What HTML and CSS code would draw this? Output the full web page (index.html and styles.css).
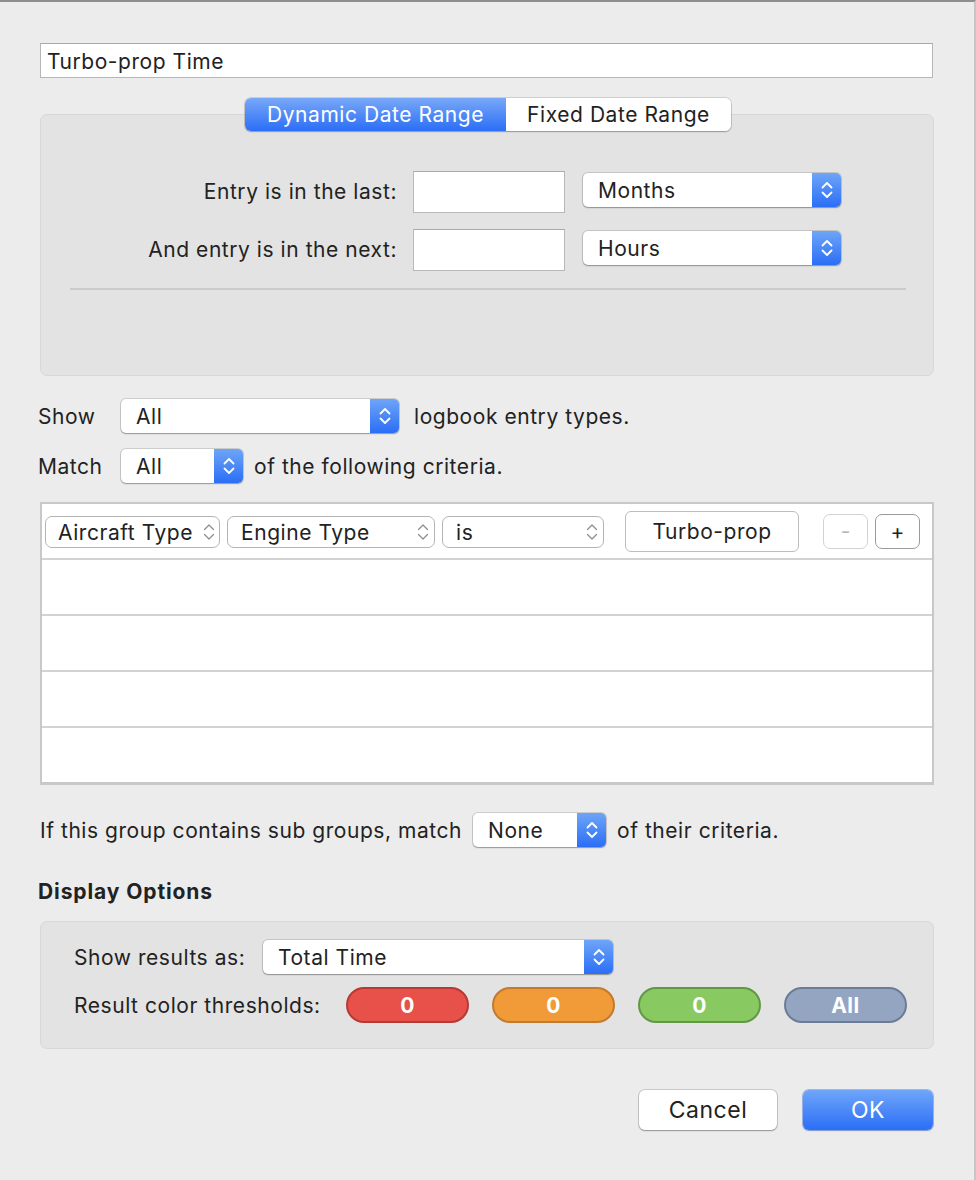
FILE: index.html
```html
<!DOCTYPE html>
<html>
<head>
<meta charset="utf-8">
<link rel="stylesheet" href="styles.css">
</head>
<body>
<div class="window">
  <div class="title-field">Turbo-prop Time</div>

  <div class="seg-wrap">
    <div class="segmented">
      <div class="seg seg-on">Dynamic Date Range</div>
      <div class="seg seg-off">Fixed Date Range</div>
    </div>
  </div>

  <div class="group date-group">
    <div class="date-grid">
      <div class="date-label">Entry is in the last:</div>
      <div class="field"></div>
      <div class="popup popup-months"><span class="popup-text">Months</span><span class="stepper"><svg width="14" height="22" viewBox="0 0 14 22"><path d="M2.5 8.5 L7 4 L11.5 8.5 M2.5 13.5 L7 18 L11.5 13.5" stroke="#fff" stroke-width="1.8" fill="none" stroke-linecap="round" stroke-linejoin="round"/></svg></span></div>

      <div class="date-label">And entry is in the next:</div>
      <div class="field"></div>
      <div class="popup popup-months"><span class="popup-text">Hours</span><span class="stepper"><svg width="14" height="22" viewBox="0 0 14 22"><path d="M2.5 8.5 L7 4 L11.5 8.5 M2.5 13.5 L7 18 L11.5 13.5" stroke="#fff" stroke-width="1.8" fill="none" stroke-linecap="round" stroke-linejoin="round"/></svg></span></div>
    </div>
    <div class="separator"></div>
  </div>

  <div class="line-row show-row">
    <span class="row-label">Show</span>
    <div class="popup popup-show"><span class="popup-text">All</span><span class="stepper"><svg width="14" height="22" viewBox="0 0 14 22"><path d="M2.5 8.5 L7 4 L11.5 8.5 M2.5 13.5 L7 18 L11.5 13.5" stroke="#fff" stroke-width="1.8" fill="none" stroke-linecap="round" stroke-linejoin="round"/></svg></span></div>
    <span class="after-text">logbook entry types.</span>
  </div>

  <div class="line-row match-row">
    <span class="row-label">Match</span>
    <div class="popup popup-match"><span class="popup-text">All</span><span class="stepper"><svg width="14" height="22" viewBox="0 0 14 22"><path d="M2.5 8.5 L7 4 L11.5 8.5 M2.5 13.5 L7 18 L11.5 13.5" stroke="#fff" stroke-width="1.8" fill="none" stroke-linecap="round" stroke-linejoin="round"/></svg></span></div>
    <span class="after-text">of the following criteria.</span>
  </div>

  <div class="criteria">
    <div class="crow crow-first">
      <div class="gpopup gp-aircraft"><span>Aircraft Type</span><svg class="gchev" width="12" height="20" viewBox="0 0 12 20"><path d="M1.5 7.5 L6 3 L10.5 7.5 M1.5 12.5 L6 17 L10.5 12.5" stroke="#8e8e8e" stroke-width="1.3" fill="none" stroke-linecap="round" stroke-linejoin="round"/></svg></div>
      <div class="gpopup gp-engine"><span>Engine Type</span><svg class="gchev" width="12" height="20" viewBox="0 0 12 20"><path d="M1.5 7.5 L6 3 L10.5 7.5 M1.5 12.5 L6 17 L10.5 12.5" stroke="#8e8e8e" stroke-width="1.3" fill="none" stroke-linecap="round" stroke-linejoin="round"/></svg></div>
      <div class="gpopup gp-is"><span>is</span><svg class="gchev" width="12" height="20" viewBox="0 0 12 20"><path d="M1.5 7.5 L6 3 L10.5 7.5 M1.5 12.5 L6 17 L10.5 12.5" stroke="#8e8e8e" stroke-width="1.3" fill="none" stroke-linecap="round" stroke-linejoin="round"/></svg></div>
      <div class="value-field">Turbo-prop</div>
      <div class="sq-btn sq-disabled">-</div>
      <div class="sq-btn">+</div>
    </div>
    <div class="crow"></div>
    <div class="crow"></div>
    <div class="crow"></div>
    <div class="crow crow-last"></div>
  </div>

  <div class="line-row sub-row">
    <span class="sub-label">If this group contains sub groups, match</span>
    <div class="popup popup-none"><span class="popup-text">None</span><span class="stepper"><svg width="14" height="22" viewBox="0 0 14 22"><path d="M2.5 8.5 L7 4 L11.5 8.5 M2.5 13.5 L7 18 L11.5 13.5" stroke="#fff" stroke-width="1.8" fill="none" stroke-linecap="round" stroke-linejoin="round"/></svg></span></div>
    <span class="after-text">of their criteria.</span>
  </div>

  <div class="section-title">Display Options</div>

  <div class="group display-group">
    <div class="disp-row">
      <span class="disp-label disp-label-1">Show results as:</span>
      <div class="popup popup-results"><span class="popup-text">Total Time</span><span class="stepper"><svg width="14" height="22" viewBox="0 0 14 22"><path d="M2.5 8.5 L7 4 L11.5 8.5 M2.5 13.5 L7 18 L11.5 13.5" stroke="#fff" stroke-width="1.8" fill="none" stroke-linecap="round" stroke-linejoin="round"/></svg></span></div>
    </div>
    <div class="disp-row disp-row-2">
      <span class="disp-label disp-label-2">Result color thresholds:</span>
      <div class="pills">
        <div class="pill pill-red">0</div>
        <div class="pill pill-orange">0</div>
        <div class="pill pill-green">0</div>
        <div class="pill pill-gray">All</div>
      </div>
    </div>
  </div>

  <div class="buttons">
    <div class="btn btn-cancel">Cancel</div>
    <div class="btn btn-ok">OK</div>
  </div>
</div>
</body>
</html>
```

FILE: styles.css
```css
* { box-sizing: border-box; }

html, body {
  margin: 0;
  padding: 0;
  background: #ececec;
}

body {
  font-family: Inter, "Liberation Sans", Arial, sans-serif;
  font-size: 21px;
  letter-spacing: 0.55px;
  color: #222;
}

.window {
  width: 976px;
  height: 1180px;
  border-top: 2px solid #8e8e8e;
  border-right: 2px solid #c6c6c6;
  padding: 41px 0 0 40px;
  background: #ececec;
  overflow: hidden;
}

.title-field {
  width: 893px;
  height: 35px;
  background: #fff;
  border: 1px solid #b6b6b6;
  border-top-color: #a9a9a9;
  padding-left: 6px;
  line-height: 35px;
}

.seg-wrap {
  width: 894px;
  display: flex;
  justify-content: center;
  margin-top: 20px;
  position: relative;
  z-index: 1;
  padding-left: 2px;
}

.segmented {
  display: flex;
  height: 33px;
  border-radius: 6px;
  box-shadow: 0 0 0 1px rgba(0,0,0,0.12), 0 1px 1.5px rgba(0,0,0,0.25);
  overflow: hidden;
  background: #fff;
}

.seg {
  height: 33px;
  line-height: 33px;
  text-align: center;
  white-space: nowrap;
}

.seg-on {
  width: 261px;
  color: #fff;
  background: linear-gradient(#79a8f8, #2b6ef6);
}

.seg-off {
  width: 225px;
  color: #222;
  background: #fff;
}

.group {
  background: #e3e3e3;
  border: 1px solid #d8d8d8;
  border-radius: 7px;
  width: 894px;
}

.date-group {
  margin-top: -17px;
  height: 262px;
  padding-top: 56px;
}

.date-grid {
  display: grid;
  grid-template-columns: 372px 152px 258px;
  row-gap: 16px;
  align-items: center;
}

.date-label {
  text-align: right;
  padding-right: 16px;
  white-space: nowrap;
  margin-top: -2px;
}

.field {
  width: 152px;
  height: 42px;
  background: #fff;
  border: 1px solid #b8b8b8;
  border-top-color: #aaaaaa;
}

.popup {
  display: flex;
  align-items: center;
  height: 34px;
  background: #fff;
  border-radius: 5px;
  box-shadow: 0 0 0 1px rgba(0,0,0,0.13), 0 1px 1.5px rgba(0,0,0,0.28);
  overflow: hidden;
}

.popup-months {
  margin-left: 18px;
  width: 258px;
  margin-top: -4px;
}

.popup-text {
  flex: 1;
  padding-left: 15px;
  white-space: nowrap;
}

.stepper {
  width: 29px;
  height: 34px;
  background: linear-gradient(#6ea5f8, #2b6ef6);
  display: flex;
  align-items: center;
  justify-content: center;
}

.separator {
  margin: 17px 27px 0 29px;
  height: 2px;
  background: #cbcbcb;
}

.line-row {
  display: flex;
  align-items: center;
  white-space: nowrap;
}

.row-label {
  width: 83px;
  margin-left: -2px;
}

.show-row {
  margin-top: 23px;
}

.popup-show {
  width: 278px;
}

.after-text {
  margin-left: 15px;
}

.match-row {
  margin-top: 16px;
}

.popup-match {
  width: 122px;
}

.match-row .after-text {
  margin-left: 11px;
}

.criteria {
  margin-top: 19px;
  width: 894px;
  border: 2px solid #c8c8c8;
  border-bottom-width: 3px;
  background: #fff;
}

.crow {
  height: 56px;
  border-bottom: 2px solid #d2d2d2;
}

.crow-last {
  height: 54px;
  border-bottom: none;
}

.crow-first {
  display: flex;
  align-items: center;
  padding-left: 3px;
  white-space: nowrap;
}

.gpopup {
  height: 32px;
  border: 1px solid #b4b4b4;
  border-radius: 7px;
  display: flex;
  align-items: center;
  justify-content: space-between;
  padding: 0 5px 0 13px;
  background: #fff;
  margin-top: 2px;
  overflow: hidden;
}

.gp-aircraft { width: 175px; padding-left: 12px; padding-right: 4px; }
.gp-engine { width: 208px; margin-left: 7px; }
.gp-is { width: 162px; margin-left: 7px; }

.gpopup .gchev { flex: none; }

.value-field {
  width: 174px;
  height: 41px;
  margin-left: 21px;
  border: 1px solid #bdbdbd;
  border-radius: 6px;
  display: flex;
  align-items: center;
  justify-content: center;
  background: #fff;
}

.sq-btn {
  width: 45px;
  height: 35px;
  margin-left: 7px;
  border: 1px solid #9a9a9a;
  border-radius: 7px;
  display: flex;
  align-items: center;
  justify-content: center;
  color: #222;
  background: #fff;
  margin-top: 1px;
  letter-spacing: 0;
}

.sq-disabled {
  margin-left: 24px;
  border-color: #d2d2d2;
  color: #b8b8b8;
}

.sub-row {
  margin-top: 28px;
}

.popup-none {
  width: 133px;
  margin-left: 11px;
}

.sub-row .after-text {
  margin-left: 11px;
}

.section-title {
  margin-top: 29px;
  margin-left: -2px;
  font-weight: 700;
  letter-spacing: 0.9px;
  height: 32px;
  line-height: 32px;
}

.display-group {
  margin-top: 13px;
  height: 128px;
  padding: 18px 0 0 33px;
  white-space: nowrap;
}

.disp-row {
  display: flex;
  align-items: center;
}

.disp-label-1 {
  width: 189px;
}

.popup-results {
  width: 350px;
}

.disp-row-2 {
  margin-top: 13px;
}

.disp-label-2 {
  width: 272px;
}

.pills {
  display: flex;
  gap: 23px;
}

.pill {
  width: 123px;
  height: 36px;
  border-radius: 18px;
  border: 2px solid;
  color: #fff;
  font-weight: 700;
  display: flex;
  align-items: center;
  justify-content: center;
}

.pill-red { background: #e8504a; border-color: #b53a34; }
.pill-orange { background: #f19a38; border-color: #c27a2e; }
.pill-green { background: #88c962; border-color: #629845; }
.pill-gray { background: #94a5c2; border-color: #6d7c96; }

.buttons {
  display: flex;
  justify-content: flex-end;
  width: 893px;
  margin-top: 41px;
  gap: 26px;
}

.btn {
  height: 40px;
  border-radius: 6px;
  display: flex;
  align-items: center;
  justify-content: center;
  font-size: 23px;
}

.btn-cancel {
  width: 138px;
  background: #fff;
  box-shadow: 0 0 0 1px rgba(0,0,0,0.14), 0 1px 1.5px rgba(0,0,0,0.28);
}

.btn-ok {
  width: 130px;
  color: #fff;
  background: linear-gradient(#6fa6f9, #2b6ef6);
  box-shadow: 0 0 0 1px rgba(40,100,230,0.4), 0 1px 1.5px rgba(0,0,0,0.2);
}
```
